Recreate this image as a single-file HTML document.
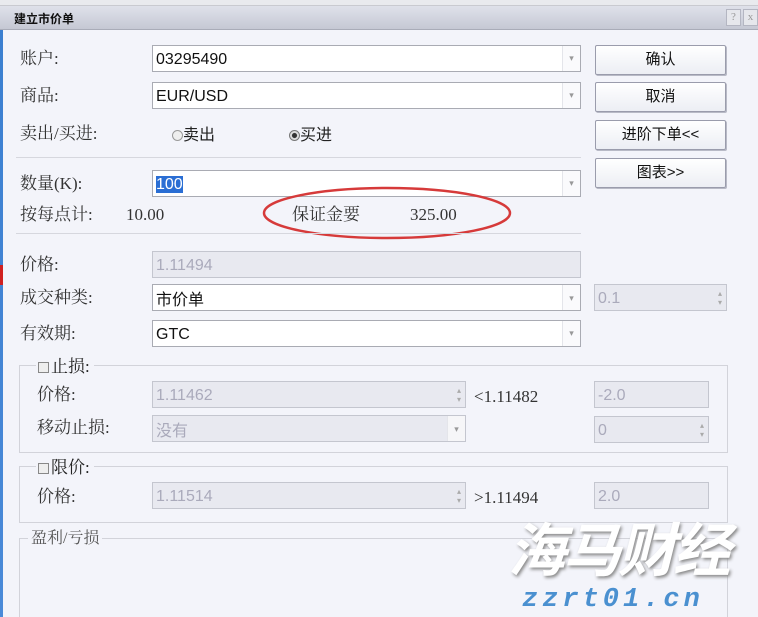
<!DOCTYPE html>
<html><head><meta charset="utf-8"><style>
*{margin:0;padding:0;box-sizing:border-box}
html,body{width:758px;height:617px;overflow:hidden}
body{background:#f3f4fa;position:relative;font-family:"Liberation Serif","Noto Serif CJK SC",serif;font-size:16px;color:#222}
.a{position:absolute;white-space:nowrap}
.lbl{position:absolute;font-size:17px;color:#333;line-height:20px;white-space:nowrap}
.inp{position:absolute;background:#fff;border:1px solid #a9abb3;font-family:"Liberation Sans","Noto Sans CJK SC",sans-serif;font-size:16px;line-height:27px;padding-left:3px;color:#111;white-space:nowrap}
.dis{background:#e8e9f0;border-color:#c4c6cf;color:#aab}
.arr{position:absolute;right:0;top:0;bottom:0;width:18px;border-left:1px solid #e4e5ea;background:#fafafc;color:#999;font-size:9px;text-align:center;line-height:25px}
.btn{position:absolute;left:595px;width:131px;height:30px;border:1px solid #9a9cac;border-radius:2px;background:linear-gradient(#ffffff,#eceef4);box-shadow:1px 1px 0 #b8bac6;text-align:center;font-size:15px;line-height:28px;font-family:"Liberation Sans","Noto Sans CJK SC",sans-serif;color:#111}
.sep{position:absolute;height:1px;background:#d6d7de}
.grp{position:absolute;border:1px solid #d2d3da}
.cb{display:inline-block;width:11px;height:11px;border:1px solid #888;background:#eee;vertical-align:-1px;margin-right:2px}
.spin{position:absolute;right:4px;top:4px;color:#aaa;font-size:8px;line-height:9px}
</style></head><body>
<div class="a" style="left:0;top:0;width:758px;height:6px;background:#e9eaee;border-bottom:1px solid #c9cad0"></div>
<div class="a" style="left:0;top:6px;width:758px;height:24px;background:linear-gradient(#dfe1ea,#c5c8d4);border-bottom:1px solid #a9acb8"></div>
<div class="a" style="left:14px;top:10px;font-size:12px;font-weight:bold;font-family:'Noto Sans CJK SC',sans-serif;color:#111">建立市价单</div>
<div class="a" style="left:726px;top:9px;width:15px;height:17px;border:1px solid #b4b6c2;background:#e6e7ec;color:#999;font-size:11px;text-align:center;line-height:15px">?</div>
<div class="a" style="left:743px;top:9px;width:15px;height:17px;border:1px solid #b4b6c2;background:#e6e7ec;color:#999;font-size:11px;text-align:center;line-height:15px">x</div>
<div class="a" style="left:0;top:30px;width:3px;height:587px;background:linear-gradient(#3b7fd0,#4a8ad8)"></div>
<div class="a" style="left:0;top:265px;width:3px;height:20px;background:#d02020"></div>

<div class="lbl" style="left:20px;top:49px">账户:</div>
<div class="inp" style="left:152px;top:45px;width:429px;height:27px">03295490<div class="arr">▾</div></div>
<div class="lbl" style="left:20px;top:86px">商品:</div>
<div class="inp" style="left:152px;top:82px;width:429px;height:27px">EUR/USD<div class="arr">▾</div></div>
<div class="lbl" style="left:20px;top:124px">卖出/买进:</div>
<div class="a" style="left:172px;top:123px;font-size:16px;font-family:'Noto Sans CJK SC',sans-serif;line-height:20px"><span style="display:inline-block;width:11px;height:11px;border:1px solid #999;border-radius:50%;background:#eee;vertical-align:-1px"></span>卖出</div>
<div class="a" style="left:289px;top:123px;font-size:16px;font-family:'Noto Sans CJK SC',sans-serif;line-height:20px"><span style="display:inline-block;width:11px;height:11px;border:1px solid #777;border-radius:50%;background:radial-gradient(#333 35%,#ddd 45%);vertical-align:-1px"></span>买进</div>
<div class="sep" style="left:16px;top:157px;width:565px"></div>

<div class="lbl" style="left:20px;top:174px">数量(K):</div>
<div class="inp" style="left:152px;top:170px;width:429px;height:27px"><span style="background:#2a6ed4;color:#fff">100</span><div class="arr">▾</div></div>
<div class="lbl" style="left:20px;top:205px">按每点计:</div>
<div class="lbl" style="left:126px;top:205px">10.00</div>
<div class="lbl" style="left:292px;top:205px">保证金要</div>
<div class="lbl" style="left:410px;top:205px">325.00</div>
<svg class="a" style="left:260px;top:184px" width="256" height="58"><ellipse cx="127" cy="29" rx="123" ry="25" fill="none" stroke="#d63a3a" stroke-width="2.5"/></svg>
<div class="sep" style="left:16px;top:233px;width:565px"></div>

<div class="lbl" style="left:20px;top:255px">价格:</div>
<div class="inp dis" style="left:152px;top:251px;width:429px;height:27px">1.11494</div>
<div class="lbl" style="left:20px;top:288px">成交种类:</div>
<div class="inp" style="left:152px;top:284px;width:429px;height:27px;font-family:'Noto Sans CJK SC',sans-serif">市价单<div class="arr">▾</div></div>
<div class="inp dis" style="left:594px;top:284px;width:133px;height:27px">0.1<div class="spin">▴<br>▾</div></div>
<div class="lbl" style="left:20px;top:324px">有效期:</div>
<div class="inp" style="left:152px;top:320px;width:429px;height:27px">GTC<div class="arr">▾</div></div>

<div class="grp" style="left:19px;top:365px;width:709px;height:88px"></div>
<div class="a" style="left:36px;top:357px;background:#f3f4fa;padding:0 4px 0 2px;line-height:20px;font-size:17px"><span class="cb"></span>止损:</div>
<div class="lbl" style="left:37px;top:385px">价格:</div>
<div class="inp dis" style="left:152px;top:381px;width:314px;height:27px">1.11462<div class="spin">▴<br>▾</div></div>
<div class="lbl" style="left:474px;top:387px">&lt;1.11482</div>
<div class="inp dis" style="left:594px;top:381px;width:115px;height:27px">-2.0</div>
<div class="lbl" style="left:37px;top:418px">移动止损:</div>
<div class="inp dis" style="left:152px;top:415px;width:314px;height:27px;font-family:'Noto Sans CJK SC',sans-serif">没有<div class="arr" style="background:#f6f6f8">▾</div></div>
<div class="inp dis" style="left:594px;top:416px;width:115px;height:27px">0<div class="spin">▴<br>▾</div></div>

<div class="grp" style="left:19px;top:466px;width:709px;height:57px"></div>
<div class="a" style="left:36px;top:458px;background:#f3f4fa;padding:0 4px 0 2px;line-height:20px;font-size:17px"><span class="cb"></span>限价:</div>
<div class="lbl" style="left:37px;top:487px">价格:</div>
<div class="inp dis" style="left:152px;top:482px;width:314px;height:27px">1.11514<div class="spin">▴<br>▾</div></div>
<div class="lbl" style="left:474px;top:488px">&gt;1.11494</div>
<div class="inp dis" style="left:594px;top:482px;width:115px;height:27px">2.0</div>

<div class="grp" style="left:19px;top:538px;width:709px;height:90px"></div>
<div class="a" style="left:28px;top:529px;background:#f3f4fa;padding:0 3px;line-height:20px;color:#555">盈利/亏损</div>

<div class="btn" style="top:45px">确认</div>
<div class="btn" style="top:82px">取消</div>
<div class="btn" style="top:120px">进阶下单&lt;&lt;</div>
<div class="btn" style="top:158px">图表&gt;&gt;</div>

<div class="a" style="left:514px;top:514px;font-size:58px;font-weight:bold;color:#fff;font-family:'Noto Sans CJK SC',sans-serif;text-shadow:2px 2px 3px #888;letter-spacing:-3px;transform:skewX(-14deg);line-height:64px">海马财经</div>
<div class="a" style="left:522px;top:584px;font-size:27px;font-weight:bold;font-style:italic;color:#4a90d0;font-family:'Liberation Mono',monospace;letter-spacing:4px;line-height:32px">zzrt01.cn</div>
</body></html>
